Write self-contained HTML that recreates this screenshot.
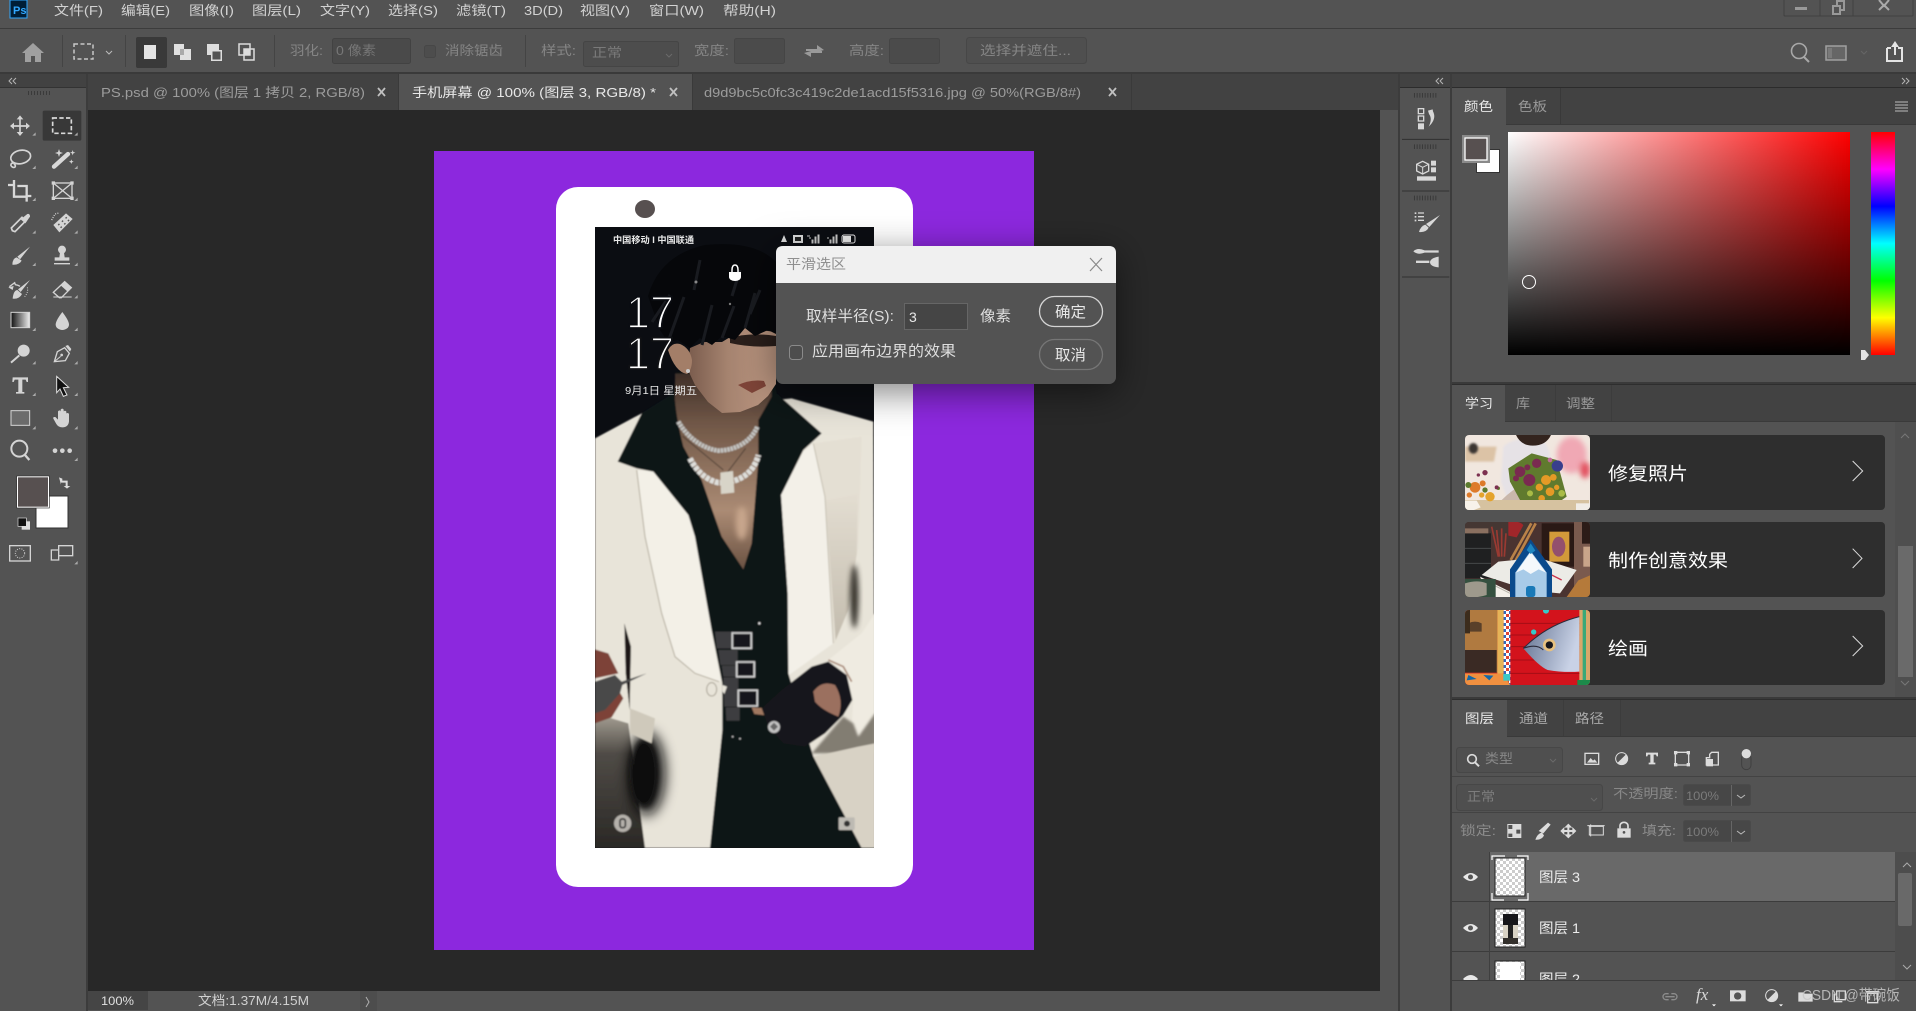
<!DOCTYPE html>
<html lang="zh"><head><meta charset="utf-8"><title>Photoshop</title>
<style>
html,body{margin:0;padding:0;background:#535353;width:1916px;height:1011px;overflow:hidden}
svg{display:block;position:absolute;left:0;top:0}
text{font-family:"Liberation Sans","Noto Sans CJK SC",sans-serif}
.m{fill:#d2d2d2;font-size:13px}
.d{fill:#858585;font-size:13px}
.p{fill:#9c9c9c;font-size:13px}
.w{fill:#e8e8e8;font-size:13px}
.c{fill:#fff;font-size:18px}
.l{fill:#dedede;font-size:15px}
</style></head><body>
<svg width="1916" height="1011" viewBox="0 0 1916 1011" xmlns="http://www.w3.org/2000/svg">
<defs>
<linearGradient id="gh"><stop offset="0" stop-color="#fff"/><stop offset="1" stop-color="#f00"/></linearGradient>
<linearGradient id="gv" x2="0" y2="1"><stop offset="0" stop-color="#000" stop-opacity="0"/><stop offset="1" stop-color="#000"/></linearGradient>
<linearGradient id="hue" x2="0" y2="1"><stop offset="0" stop-color="#f00"/><stop offset=".167" stop-color="#f0f"/><stop offset=".333" stop-color="#00f"/><stop offset=".5" stop-color="#0ff"/><stop offset=".667" stop-color="#0f0"/><stop offset=".833" stop-color="#ff0"/><stop offset="1" stop-color="#f00"/></linearGradient>
<linearGradient id="tg"><stop offset="0" stop-color="#111"/><stop offset="1" stop-color="#eee"/></linearGradient>
<linearGradient id="sk" x2="0" y2="1"><stop offset="0" stop-color="#3f2f28"/><stop offset=".25" stop-color="#6f5646"/><stop offset=".7" stop-color="#ab8b74"/><stop offset="1" stop-color="#6a5142"/></linearGradient>
<linearGradient id="fc"><stop offset="0" stop-color="#7a5c4d"/><stop offset=".45" stop-color="#a5836f"/><stop offset="1" stop-color="#c09a84"/></linearGradient>
<linearGradient id="pn" x2="0" y2="1"><stop offset="0" stop-color="#e3ddd1"/><stop offset="1" stop-color="#c3bcae"/></linearGradient>
<linearGradient id="lf" x2="0" y2="1"><stop offset="0" stop-color="#a8a296"/><stop offset=".3" stop-color="#4f4b46"/><stop offset="1" stop-color="#2a2825"/></linearGradient>
<linearGradient id="fish" x2="1" y2=".3"><stop offset="0" stop-color="#60708f"/><stop offset="1" stop-color="#c9d2e6"/></linearGradient>
<pattern id="chk" width="6" height="6" patternUnits="userSpaceOnUse"><rect width="6" height="6" fill="#fff"/><rect width="3" height="3" fill="#ccc"/><rect x="3" y="3" width="3" height="3" fill="#ccc"/></pattern>
<pattern id="chk2" width="18" height="18" patternUnits="userSpaceOnUse"><rect width="18" height="18" fill="#fff"/><rect width="9" height="9" fill="#d43"/><rect x="9" y="9" width="9" height="9" fill="#36b"/></pattern>
<filter id="b20" x="-80%" y="-80%" width="260%" height="260%"><feGaussianBlur stdDeviation="20"/></filter>
<filter id="b8" x="-50%" y="-50%" width="200%" height="200%"><feGaussianBlur stdDeviation="8"/></filter>
<filter id="b3" x="-50%" y="-50%" width="200%" height="200%"><feGaussianBlur stdDeviation="3"/></filter>
<filter id="b2" x="-5%" y="-5%" width="110%" height="110%"><feGaussianBlur stdDeviation="2"/></filter>
<filter id="sh" x="-30%" y="-40%" width="160%" height="220%"><feDropShadow dx="0" dy="8" stdDeviation="18" flood-color="#000" flood-opacity=".5"/></filter>
<clipPath id="ph"><rect x="595" y="227" width="279" height="621"/></clipPath>
<clipPath id="c1"><rect x="75" y="165" width="375" height="225" rx="12"/></clipPath>
<clipPath id="c2"><rect x="75" y="426" width="375" height="225" rx="12"/></clipPath>
<clipPath id="c3"><rect x="75" y="690" width="375" height="225" rx="12"/></clipPath>
<clipPath id="lay"><rect x="1452" y="852" width="443" height="128"/></clipPath>
</defs>

<!-- chrome -->
<rect width="1916" height="1011" fill="#535353"/>
<rect y="28" width="1916" height="1" fill="#3c3c3c"/>
<rect y="72" width="1916" height="2" fill="#3a3a3a"/>
<rect x="88" y="74" width="1312" height="36" fill="#424242"/>
<rect x="0" y="74" width="86" height="14" fill="#424242"/>
<rect x="0" y="87" width="86" height="1" fill="#333"/>
<rect x="86" y="74" width="2" height="937" fill="#3c3c3c"/>
<rect x="88" y="110" width="1292" height="881" fill="#282828"/>
<rect x="1380" y="110" width="20" height="901" fill="#535353"/>
<rect x="1400" y="74" width="516" height="14" fill="#424242"/>
<rect x="1400" y="87" width="516" height="1" fill="#2c2c2c"/>
<rect x="1398" y="74" width="2" height="937" fill="#3c3c3c"/>
<rect x="1450" y="74" width="2" height="937" fill="#3c3c3c"/>

<!-- logo + menu -->
<rect x="10" y="0" width="17" height="18" fill="#001e36" stroke="#31a8ff"/>
<text x="13" y="14" font-size="11" font-weight="bold" fill="#31a8ff">Ps</text>
<text class="m" x="54" y="15" textLength="49" lengthAdjust="spacingAndGlyphs">文件(F)</text>
<text class="m" x="121" y="15" textLength="49" lengthAdjust="spacingAndGlyphs">编辑(E)</text>
<text class="m" x="189" y="15" textLength="45" lengthAdjust="spacingAndGlyphs">图像(I)</text>
<text class="m" x="252" y="15" textLength="49" lengthAdjust="spacingAndGlyphs">图层(L)</text>
<text class="m" x="320" y="15" textLength="50" lengthAdjust="spacingAndGlyphs">文字(Y)</text>
<text class="m" x="388" y="15" textLength="50" lengthAdjust="spacingAndGlyphs">选择(S)</text>
<text class="m" x="456" y="15" textLength="50" lengthAdjust="spacingAndGlyphs">滤镜(T)</text>
<text class="m" x="524" y="15" textLength="39" lengthAdjust="spacingAndGlyphs">3D(D)</text>
<text class="m" x="580" y="15" textLength="50" lengthAdjust="spacingAndGlyphs">视图(V)</text>
<text class="m" x="649" y="15" textLength="55" lengthAdjust="spacingAndGlyphs">窗口(W)</text>
<text class="m" x="723" y="15" textLength="53" lengthAdjust="spacingAndGlyphs">帮助(H)</text>

<!-- window controls -->
<path d="M1784 0v15q0 1 1 1h127q1 0 1-1V0M1820 0v16M1853 0v16" fill="none" stroke="#404040"/>
<rect x="1795" y="7" width="12" height="3" fill="#999"/>
<path d="M1833 6h7v8h-7zM1837 6V1h7v9h-4" fill="none" stroke="#999" stroke-width="2"/>
<path d="M1879 0l5 6 5-6M1879 10l5-5 5 5" fill="none" stroke="#aaa" stroke-width="2"/>

<!-- options bar -->
<path d="M33 43l11 10h-3v9h-6v-6h-4v6h-6v-9h-3z" fill="#a0a0a0"/>
<rect x="62" y="35" width="1" height="32" fill="#444"/>
<rect x="74" y="44" width="19" height="15" fill="none" stroke="#c8c8c8" stroke-width="1.5" stroke-dasharray="4 2.5"/>
<path d="M106 51l3 3 3-3" fill="none" stroke="#bbb"/>
<rect x="125" y="35" width="1" height="32" fill="#444"/>
<rect x="136" y="37" width="31" height="31" rx="2" fill="#393939"/>
<rect x="144" y="45" width="12" height="14" fill="#e4e4e4"/>
<path d="M174 44h10v5h7v11h-11v-5h-6z" fill="#e0e0e0"/><path d="M180 49h4v6h-4z" fill="#aaa"/>
<path d="M207 44h12v6h3v11h-11v-6h-4z" fill="#ddd"/><rect x="212" y="51" width="9" height="9" fill="#535353" stroke="#ddd"/>
<rect x="239" y="44" width="11" height="11" fill="none" stroke="#ddd" stroke-width="1.5"/><rect x="244" y="49" width="10" height="11" fill="none" stroke="#ddd" stroke-width="1.5"/><rect x="244" y="49" width="6" height="6" fill="#ddd"/>
<rect x="274" y="35" width="1" height="32" fill="#444"/>
<text class="d" x="290" y="55" textLength="33" lengthAdjust="spacingAndGlyphs">羽化:</text>
<rect x="332.500" y="38.500" width="78" height="25" rx="2" fill="#4a4a4a" stroke="#424242"/>
<text x="336" y="55" font-size="13" fill="#777" textLength="40" lengthAdjust="spacingAndGlyphs">0 像素</text>
<rect x="424.500" y="45.500" width="11" height="12" rx="2" fill="#4d4d4d" stroke="#474747"/>
<text class="d" x="445" y="55" textLength="58" lengthAdjust="spacingAndGlyphs">消除锯齿</text>
<rect x="525" y="35" width="1" height="32" fill="#444"/>
<text class="d" x="541" y="55" textLength="35" lengthAdjust="spacingAndGlyphs">样式:</text>
<rect x="583.500" y="41.500" width="95" height="25" rx="2" fill="#4d4d4d" stroke="#454545"/>
<text x="592" y="57" font-size="13" fill="#7a7a7a" textLength="30" lengthAdjust="spacingAndGlyphs">正常</text>
<path d="M666 54l3 3 3-3" fill="none" stroke="#6a6a6a"/>
<text class="d" x="694" y="55" textLength="35" lengthAdjust="spacingAndGlyphs">宽度:</text>
<rect x="734.500" y="38.500" width="50" height="25" rx="2" fill="#4b4b4b" stroke="#454545"/>
<path d="M806 49h11v-4l7 5-7 2v-1h-11zM822 53h-11v4l-7-4 7-2v0h11z" fill="#9a9a9a"/>
<text class="d" x="849" y="55" textLength="35" lengthAdjust="spacingAndGlyphs">高度:</text>
<rect x="889.500" y="38.500" width="50" height="25" rx="2" fill="#4b4b4b" stroke="#454545"/>
<rect x="966.500" y="37.500" width="120" height="26" rx="3" fill="#4f4f4f" stroke="#474747"/>
<text class="d" x="980" y="55" textLength="91" lengthAdjust="spacingAndGlyphs">选择并遮住...</text>
<circle cx="1799" cy="51" r="7.500" fill="none" stroke="#a8a8a8" stroke-width="1.6"/><path d="M1804 57l5 5" stroke="#a8a8a8" stroke-width="2"/>
<rect x="1826" y="46" width="20" height="14" fill="#666" stroke="#a0a0a0" stroke-width="1.500"/><rect x="1828" y="48" width="4" height="10" fill="#7a7a7a"/>
<path d="M1861 51l3 3 3-3" fill="none" stroke="#666"/>
<path d="M1887 48h3v-1M1899 47v1h3v13h-15v-13" fill="none" stroke="#e4e4e4" stroke-width="2"/><path d="M1895 41l-4 6h3v8h2v-8h3z" fill="#e4e4e4"/>

<!-- collapse arrows -->
<path d="M12 78l-3 3 3 3M16 78l-3 3 3 3M1439 78l-3 3 3 3M1443 78l-3 3 3 3M1902 78l3 3-3 3M1906 78l3 3-3 3" fill="none" stroke="#b5b5b5" stroke-width="1"/>
<line x1="28" x2="52" y1="93" y2="93" stroke="#3a3a3a" stroke-width="4" stroke-dasharray="1 2"/>

<!-- doc tabs -->
<rect x="399" y="74" width="293" height="36" fill="#535353"/>
<rect x="398" y="74" width="1" height="36" fill="#3a3a3a"/><rect x="692" y="74" width="1" height="36" fill="#3a3a3a"/><rect x="1131" y="74" width="1" height="36" fill="#3a3a3a"/>
<text class="p" x="101" y="97" textLength="264" lengthAdjust="spacingAndGlyphs">PS.psd @ 100% (图层 1 拷贝 2, RGB/8)</text>
<text class="w" x="412" y="97" textLength="244" lengthAdjust="spacingAndGlyphs">手机屏幕 @ 100% (图层 3, RGB/8) *</text>
<text class="p" x="704" y="97" textLength="377" lengthAdjust="spacingAndGlyphs">d9d9bc5c0fc3c419c2de1acd15f5316.jpg @ 50%(RGB/8#)</text>
<path d="M378 88l7 8m0-8l-7 8M670 88l7 8m0-8l-7 8M1109 88l7 8m0-8l-7 8" stroke="#c0c0c0" stroke-width="1.800"/>

<!-- document -->
<rect x="434" y="151" width="600" height="799" fill="#8c28de"/>
<rect x="556" y="187" width="357" height="700" rx="22" fill="#fff"/>
<ellipse cx="645" cy="209" rx="10" ry="9" fill="#575050"/>
<g clip-path="url(#ph)">
 <rect x="595" y="227" width="279" height="621" fill="#0b0d12"/>
 <g transform="translate(595 380) scale(.33333)" filter="url(#b2)">
  <!-- jacket -->
  <path d="M0 175L140 100 590 55 835 125 840 1404H0z" fill="#e8e4d9"/>
  <!-- right panel -->
  <path d="M655 190L800 170 790 500 760 690 720 790z" fill="#e4dfd3"/>
  <path d="M692 362L788 342 785 520 760 690 722 780z" fill="url(#pn)"/>
  <ellipse cx="778" cy="650" rx="13" ry="95" fill="#35322c" filter="url(#b8)"/>
  <!-- lapels -->
  <path d="M125 270L175 275 280 405 300 470 350 750 378 905 300 880 240 830 200 700 150 470z" fill="#f3f0e7"/>
  <path d="M125 270L150 470 200 700 240 830 300 880 372 905" fill="none" stroke="#b4ad9e" stroke-width="3"/>
  <path d="M655 190L690 350 715 790 582 885 558 345 625 215z" fill="#f3f0e8"/>
  <path d="M655 190L690 350 715 790" fill="none" stroke="#c5bfb1" stroke-width="3"/>
  <!-- sleeve -->
  <path d="M700 840L800 760 840 700V1000L790 1070 770 1040 775 960 755 885z" fill="#efebe1"/>
  <path d="M650 1120L745 1010 775 1030 790 1070 840 1000V1120z" fill="#827d72" filter="url(#b3)"/>
  <path d="M655 1130L800 1404H840V1090L790 1100z" fill="#d8d2c5"/>
  <!-- left bottom shadow -->
  <path d="M0 1000L100 1030 150 1404H0z" fill="url(#lf)"/>
  <ellipse cx="155" cy="1180" rx="55" ry="125" fill="#0f0e0c" filter="url(#b20)"/>
  <ellipse cx="145" cy="1180" rx="40" ry="100" fill="#0f0e0c" filter="url(#b8)"/>
  <path d="M105 985L180 1015 170 1090 105 1060z" fill="#cfc9bb"/>
  <path d="M88 730L108 800 104 990 92 880z" fill="#1b1917"/>
  <!-- shirt -->
  <path d="M140 100L68 245 125 265 175 275 280 405 300 470 350 750 382 910 382 1050 345 1404H800L655 1130 580 880 578 640 558 345 625 210 680 160 545 40 530-20H245L235 40z" fill="#101216"/>
  <!-- skin -->
  <path d="M240-20V60Q245 120 265 200L320 300 380 470 445 568 470 490 490 240 490 120 530 50V-20z" fill="url(#sk)"/>
  <ellipse cx="440" cy="430" rx="18" ry="50" fill="#c7a68c" filter="url(#b8)"/>
  <!-- necklaces -->
  <path d="M250 125C275 170 320 205 370 212 430 210 470 180 487 140" fill="none" stroke="#c2c2c0" stroke-width="14" stroke-dasharray="8 2"/>
  <path d="M285 235C305 275 335 300 370 308 425 310 475 285 490 225" fill="none" stroke="#dededa" stroke-width="17" stroke-dasharray="12 3"/>
  <path d="M262 168L385 270M452 205L395 280" fill="none" stroke="#4f4036" stroke-width="3"/>
  <path d="M376 278l38-5 4 65-40 4z" fill="#d8d4c8"/>
  <!-- belt -->
  <path d="M360 755h55v50h-50zM370 810h58v45h-52zM380 857h45v33h-40zM385 892h45v88h-42zM392 982h42v40h-40z" fill="#3d3e40"/>
  <rect x="412" y="759" width="57" height="46" fill="#17181a" stroke="#d4d4d4" stroke-width="5"/>
  <rect x="425" y="846" width="53" height="44" fill="#17181a" stroke="#d4d4d4" stroke-width="5"/>
  <rect x="430" y="931" width="57" height="47" fill="#17181a" stroke="#d4d4d4" stroke-width="5"/>
  <circle cx="493" cy="730" r="3.500" fill="#eee"/><circle cx="413" cy="1070" r="2.500" fill="#ddd"/><circle cx="435" cy="1076" r="2.500" fill="#ddd"/>
  <ellipse cx="350" cy="928" rx="15" ry="20" fill="#e8e4d9" stroke="#a8a294" stroke-width="3"/>
  <path d="M382 915l14 5-8 22-6-8z" fill="#e9e5da"/>
  <!-- glove -->
  <path d="M470 982L512 985 512 1006 478 1002z" fill="#a07860"/>
  <path d="M500 985L560 930 650 860 700 845 755 885 772 960 745 1005 690 1060 630 1100 565 1090 520 1040z" fill="#14161a"/>
  <path d="M655 935Q680 900 720 915 748 960 730 1010 680 990 660 965z" fill="#9b705e"/>
  <path d="M700 840L745 860 770 905" stroke="#a98a78" stroke-width="5" fill="none"/>
  <circle cx="537" cy="1041" r="18" fill="#c2c2c2"/><path d="M525 1040l12-12 12 12-12 12z" fill="#666"/>
  <!-- hand + key -->
  <path d="M0 808L40 820 70 880 0 895zM0 1030L50 1012 85 955 70 930 0 990z" fill="#7d4337"/>
  <path d="M0 905L60 885 80 905 155 880 82 915 75 940 30 990 0 1000z" fill="#48484a"/>
  <!-- lower icons -->
  <circle cx="83" cy="1330" r="26" fill="#b5b1ab"/><rect x="75" y="1317" width="16" height="26" rx="6" fill="none" stroke="#333" stroke-width="5"/>
  <rect x="731" y="1312" width="48" height="38" rx="3" fill="#bdbab3"/><circle cx="756" cy="1331" r="9" fill="#333"/>
 </g>
 <!-- head -->
 <path d="M690 348L704 342 722 342 745 328 776 332V384L768 396 758 405 740 412 722 413 708 402 695 385 688 370z" fill="url(#fc)"/>
 <path d="M738 385q13-6 26-4l2 5-14 7z" fill="#7e4438"/>
 <path d="M730 338q20-6 46-2v10q-25 2-46-3z" fill="#2a1f1b"/>
 <path d="M680 344q10 4 12 16 0 10-5 14-12-2-19-24 4-8 12-6z" fill="#a37e68"/>
 <circle cx="688" cy="371" r="2" fill="#ccc"/>
 <path d="M648 296Q660 255 705 245 755 240 776 262V334L768 330 755 336 745 328 735 340 722 336 712 345 700 338 690 348 678 340 668 342 660 330z" fill="#06070a"/>
 <path d="M652 322l18-27M668 342l16-45M702 345l10-40M722 338l12-32M745 328l10-35M700 260l-6 30M740 270l-8 26M760 290l-10 24" stroke="#191b20" stroke-width="3"/>
 <circle cx="696" cy="282" r="1.500" fill="#888"/><circle cx="730" cy="304" r="1.200" fill="#777"/>
</g>
<!-- phone overlay text -->
<text x="613" y="243" font-size="9" font-weight="bold" fill="#e8e8e8" textLength="81" lengthAdjust="spacingAndGlyphs">中国移动 I 中国联通</text>
<path d="M781 242l3-7 3 7z" fill="#ddd"/>
<rect x="793" y="235" width="10" height="8" fill="#ddd"/><rect x="795" y="237" width="6" height="4" fill="#222"/>
<path d="M807 236h3M809 238h2M812 243v-3h1v3zM815 243v-6h1v6zM818 243v-8h1v8zM827 238h2M830 243v-3h1v3zM833 243v-6h1v6zM836 243v-8h1v8z" stroke="#ccc" fill="none"/>
<rect x="842" y="235" width="13" height="8" rx="2" fill="none" stroke="#eee"/><rect x="843" y="236" width="8" height="6" fill="#eee"/>
<path d="M732 272v-2q0-5 3-5t3 5v2" fill="none" stroke="#fff" stroke-width="1.500"/><path d="M729 272h12v5a6 4 0 0 1-12 0z" fill="#fff"/>
<text x="626" y="328" font-size="45" fill="#fff" stroke="#0b0d12" stroke-width="1.800" textLength="48" lengthAdjust="spacingAndGlyphs">17</text>
<text x="626" y="369" font-size="45" fill="#fff" stroke="#101114" stroke-width="1.800" textLength="48" lengthAdjust="spacingAndGlyphs">17</text>
<text x="625" y="394" font-size="10.500" fill="#e8e8e8" textLength="72" lengthAdjust="spacingAndGlyphs">9月1日 星期五</text>

<!-- dialog -->
<g filter="url(#sh)"><rect x="776" y="246" width="340" height="138" rx="7" fill="#535353"/></g>
<path d="M776 283v-30q0-7 7-7h326q7 0 7 7v30z" fill="#f0f0f0"/>
<text x="786" y="269" font-size="14" fill="#8f8f8f" textLength="60" lengthAdjust="spacingAndGlyphs">平滑选区</text>
<path d="M1090 258l12 13m0-13l-12 13" stroke="#8a8a8a" stroke-width="1.200"/>
<text class="l" x="806" y="321" textLength="88" lengthAdjust="spacingAndGlyphs">取样半径(S):</text>
<rect x="904.500" y="303.500" width="63" height="26" fill="#454545" stroke="#666"/>
<text x="909" y="322" font-size="14" fill="#e8e8e8">3</text>
<text class="l" x="980" y="321" textLength="31" lengthAdjust="spacingAndGlyphs">像素</text>
<rect x="1039.500" y="296.500" width="63" height="30" rx="15" fill="none" stroke="#d4d4d4" stroke-width="1.300"/>
<text x="1055" y="317" font-size="15" fill="#e8e8e8" textLength="31" lengthAdjust="spacingAndGlyphs">确定</text>
<rect x="1039.500" y="339.500" width="63" height="30" rx="15" fill="none" stroke="#767676" stroke-width="1.300"/>
<text x="1055" y="360" font-size="15" fill="#e8e8e8" textLength="31" lengthAdjust="spacingAndGlyphs">取消</text>
<rect x="789.500" y="345.500" width="13" height="14" rx="3" fill="#4d4d4d" stroke="#8a8a8a"/>
<text class="l" x="812" y="356" textLength="144" lengthAdjust="spacingAndGlyphs">应用画布边界的效果</text>

<!-- tools -->
<g transform="translate(0 100) scale(.33333)" fill="#d4d4d4" stroke="none">
 <rect x="128" y="32" width="116" height="90" rx="5" fill="#383838"/>
 <path fill="#aaa" d="M107 97v10h-10zM233 97v10h-10zM107 197v10h-10zM233 197v10h-10zM107 293v10h-10zM233 293v10h-10zM107 391v10h-10zM233 391v10h-10zM107 488v10h-10zM233 488v10h-10zM107 585v10h-10zM233 585v10h-10zM107 683v10h-10zM233 683v10h-10zM107 783v10h-10zM233 783v10h-10zM107 878v10h-10zM233 878v10h-10zM107 978v10h-10zM233 978v10h-10zM233 1073v10h-10zM233 1383v10h-10z"/>
 <!-- move -->
 <path d="M60 52V104M36 78H84" stroke="#d4d4d4" stroke-width="5" fill="none"/>
 <path d="M60 46l10 12H50zM60 108l10-12H50zM30 78l12-10v20zM90 78l-12-10v20z"/>
 <!-- marquee -->
 <rect x="158" y="54" width="56" height="46" fill="none" stroke="#d8d8d8" stroke-width="5" stroke-dasharray="13 7"/>
 <!-- lasso -->
 <g fill="none" stroke="#d4d4d4" stroke-width="5"><ellipse cx="62" cy="171" rx="30" ry="20" transform="rotate(-12 62 171)"/><path d="M45 190c-14-4-16 8-6 12 10 2 8-8 2-12"/></g>
 <!-- wand -->
 <path d="M162 200l42-38" stroke="#d8d8d8" stroke-width="13" stroke-linecap="round"/>
 <path d="M177 147l3 9 9 3-9 3-3 9-3-9-9-3 9-3zM218 150l2 6 6 2-6 2-2 6-2-6-6-2 6-2zM214 178l2 5 5 2-5 2-2 5-2-5-5-2 5-2z"/>
 <!-- crop -->
 <path d="M24 255H42M42 240V290H82M52 258H80V305M80 288H94" fill="none" stroke="#d8d8d8" stroke-width="7"/>
 <!-- frame -->
 <g fill="none" stroke="#d4d4d4" stroke-width="4"><rect x="160" y="249" width="56" height="46"/><path d="M160 249l56 46m0-46l-56 46"/></g>
 <path d="M155 244h10v10h-10zM211 244h10v10h-10zM155 290h10v10h-10zM211 290h10v10h-10z"/>
 <!-- eyedropper -->
 <path d="M37 392l-3-8 32-32 11 11-32 32z" fill="none" stroke="#d4d4d4" stroke-width="5"/>
 <path d="M62 358l20-16q8-2 8 8l-14 20z"/>
 <!-- heal -->
 <path d="M160 375l38-35 20 17-40 40z"/><path d="M175 372l3 3M186 362l3 3M197 352l3 3M182 380l3 3M193 370l3 3M204 360l3 3" stroke="#555" stroke-width="5"/>
 <path d="M155 360l10-18 12-3" fill="none" stroke="#d4d4d4" stroke-width="4" stroke-dasharray="3 4"/>
 <!-- brush -->
 <path d="M90 440L60 478 52 470z"/><path d="M50 472q-12 2-13 22 20 2 28-12z"/>
 <!-- stamp -->
 <circle cx="186" cy="449" r="12"/><path d="M180 458h12l2 14h14v10h-44v-10h14zM162 489h48v4h-48z"/>
 <!-- history -->
 <path d="M90 540L62 576 54 568z"/><path d="M52 570q-12 2-14 26 20 2 28-14z"/>
 <path d="M28 560l16-12 2 6q8 1 14 5" fill="none" stroke="#d4d4d4" stroke-width="4"/><path d="M25 562l16-4-3 12z"/>
 <path d="M82 562q4 14-8 28" fill="none" stroke="#d4d4d4" stroke-width="3" stroke-dasharray="3 4"/>
 <!-- eraser -->
 <path d="M160 577l34-32 20 18-30 30h-6z" fill="none" stroke="#d4d4d4" stroke-width="4"/>
 <path d="M182 556l12-11 20 18-12 11z"/><path d="M160 591h55" stroke="#d4d4d4" stroke-width="3"/>
 <!-- gradient -->
 <rect x="33" y="637" width="56" height="46" fill="url(#tg)" stroke="#d4d4d4" stroke-width="3"/>
 <!-- drop -->
 <path d="M187 636q-20 26-20 38a20 16 0 0 0 40 0q0-12-20-38z"/>
 <!-- dodge -->
 <circle cx="71" cy="752" r="18"/><path d="M58 766l-25 22" stroke="#d4d4d4" stroke-width="6"/>
 <!-- pen -->
 <path d="M163 785l9-30 22-12 14 17-12 22z" fill="none" stroke="#d4d4d4" stroke-width="4"/><path d="M196 738l8-3 10 12-4 8z"/><circle cx="185" cy="765" r="4"/><path d="M164 784l18-15" stroke="#d4d4d4" stroke-width="3"/>
 <!-- T -->
 <path d="M38 832h46v14h-4l-3-7H67v37h6v5H48v-5h7v-37H44l-3 7h-4z"/>
 <!-- arrow -->
 <path d="M170 829l36 33-16 1 11 22-11 4-10-22-10 11z" fill="#111" stroke="#ddd" stroke-width="3"/>
 <!-- rect -->
 <rect x="33" y="932" width="56" height="44" fill="#6b6b6b" stroke="#d4d4d4" stroke-width="3"/>
 <!-- hand -->
 <path d="M160 956q-2-6 6-5l8 8v-25q5-6 8 0v-5q5-6 9 0v5q5-4 8 1v5q6-3 8 2v22q-2 18-20 18-12 0-18-10z"/>
 <!-- zoom -->
 <circle cx="58" cy="1046" r="24" fill="none" stroke="#d4d4d4" stroke-width="6"/><path d="M74 1064l14 16" stroke="#d4d4d4" stroke-width="7"/>
 <!-- dots -->
 <circle cx="165" cy="1052" r="7"/><circle cx="187" cy="1052" r="7"/><circle cx="209" cy="1052" r="7"/>
 <!-- swatches -->
 <rect x="108" y="1188" width="96" height="96" fill="#fff" stroke="#333" stroke-width="3"/>
 <rect x="52" y="1130" width="94" height="92" fill="#575050" stroke="#fff" stroke-width="4"/>
 <rect x="50" y="1128" width="98" height="96" fill="none" stroke="#333" stroke-width="2"/>
 <path d="M177 1132l10 4v6h16v16h8l-10 8-10-8h6v-10h-14v6z" fill="#ddd"/>
 <rect x="65" y="1264" width="25" height="25" fill="#ddd"/><rect x="54" y="1254" width="25" height="25" fill="#111" stroke="#ddd" stroke-width="2"/>
 <!-- mask -->
 <rect x="29" y="1337" width="62" height="46" fill="none" stroke="#d4d4d4" stroke-width="4"/>
 <circle cx="60" cy="1360" r="14" fill="none" stroke="#d4d4d4" stroke-width="3" stroke-dasharray="3 4"/>
 <!-- screen -->
 <path d="M154 1350h22v30h-22zM176 1337h42v30h-42z" fill="none" stroke="#d4d4d4" stroke-width="4"/>
</g>

<!-- dock column -->
<g transform="translate(1400 80) scale(.33333)">
 <path d="M6 178H148M6 333H148M6 591H148" stroke="#303030" stroke-width="3"/>
 <path d="M42 46H112M42 200H112M42 354H112" stroke="#3a3a3a" stroke-width="14" stroke-dasharray="3 5"/>
 <g fill="#d8d8d8">
  <rect x="55" y="86" width="16" height="15" fill="none" stroke="#d8d8d8" stroke-width="4"/>
  <rect x="55" y="108" width="16" height="15" fill="none" stroke="#d8d8d8" stroke-width="4"/>
  <rect x="54" y="130" width="18" height="18"/>
  <path d="M84 92l14-4 1 6q12 22-13 46 12-24 1-38z"/>
  <path d="M68 244l18 9v20l-18 9-18-9v-20z" fill="none" stroke="#d8d8d8" stroke-width="4"/><path d="M50 253l18 9 18-9M68 262v20" stroke="#d8d8d8" stroke-width="3" fill="none"/>
  <rect x="93" y="242" width="15" height="15"/><rect x="93" y="262" width="15" height="15"/><rect x="51" y="289" width="57" height="13"/>
  <path d="M44 397h5v5h-5zM54 397h18v4H54zM44 408h5v5h-5zM54 408h18v4H54zM44 419h5v5h-5zM54 419h18v4H54z"/>
  <path d="M120 405L88 441 78 432z"/><path d="M76 434q-14 4-19 22 22 2 29-13z"/>
  <path d="M40 514q12-12 34-3h42v7H74q-20 8-34-4z"/><path d="M48 542h40v7H48zM116 530v32q-26-2-26-16 2-12 26-16z"/>
 </g>
</g>

<!-- panel: colour -->
<rect x="1452" y="88" width="464" height="36" fill="#424242"/>
<rect x="1452" y="124" width="464" height="1" fill="#3a3a3a"/>
<rect x="1452" y="88" width="54" height="37" fill="#535353"/>
<rect x="1560" y="88" width="1" height="36" fill="#393939"/>
<text x="1464" y="111" font-size="13" fill="#e8e8e8" textLength="29" lengthAdjust="spacingAndGlyphs">颜色</text>
<text x="1518" y="111" font-size="13" fill="#999" textLength="29" lengthAdjust="spacingAndGlyphs">色板</text>
<path d="M1895 102h13M1895 105h13M1895 108h13M1895 111h13M1895 404h13M1895 401h13M1895 398h13M1895 407h13M1895 714h13M1895 717h13M1895 720h13M1895 723h13" stroke="#bcbcbc"/>
<rect x="1476.500" y="149.500" width="23" height="23" fill="#fff" stroke="#333"/>
<rect x="1462" y="135" width="28" height="28" fill="#8a8a8a"/>
<rect x="1465" y="138" width="22" height="22" fill="#575050" stroke="#fff" stroke-width="1.300"/>
<rect x="1508" y="132" width="342" height="223" fill="url(#gh)"/>
<rect x="1508" y="132" width="342" height="223" fill="url(#gv)"/>
<circle cx="1529" cy="282" r="6.500" fill="none" stroke="#fff" stroke-width="1"/>
<rect x="1871" y="132" width="24" height="223" fill="url(#hue)"/>
<path d="M1861 350h4l4 5-4 5h-4z" fill="#e4e4e4"/>
<rect x="1452" y="382" width="464" height="2" fill="#3a3a3a"/>
<rect x="1452" y="384" width="464" height="1" fill="#2e2e2e"/>

<!-- panel: learn -->
<rect x="1452" y="385" width="464" height="36" fill="#424242"/>
<rect x="1452" y="421" width="464" height="1" fill="#3a3a3a"/>
<rect x="1452" y="385" width="53" height="37" fill="#535353"/>
<rect x="1555" y="385" width="1" height="36" fill="#3c3c3c"/><rect x="1611" y="385" width="1" height="36" fill="#3c3c3c"/>
<text x="1465" y="408" font-size="13" fill="#e8e8e8" textLength="28" lengthAdjust="spacingAndGlyphs">学习</text>
<text x="1516" y="408" font-size="13" fill="#999" textLength="14" lengthAdjust="spacingAndGlyphs">库</text>
<text x="1566" y="408" font-size="13" fill="#999" textLength="29" lengthAdjust="spacingAndGlyphs">调整</text>
<rect x="1465" y="435" width="420" height="75" rx="4" fill="#2e2e2e"/>
<rect x="1465" y="522" width="420" height="75" rx="4" fill="#2e2e2e"/>
<rect x="1465" y="610" width="420" height="75" rx="4" fill="#2e2e2e"/>
<g transform="translate(1440 380) scale(.33333)">
 <g clip-path="url(#c1)">
  <rect x="75" y="165" width="375" height="225" fill="#f1e7df"/>
  <path d="M75 200h95l-8 45H75z" fill="#dcc3a6" filter="url(#b3)"/>
  <ellipse cx="100" cy="205" rx="14" ry="16" fill="#3a3532" filter="url(#b3)"/>
  <ellipse cx="395" cy="225" rx="45" ry="55" fill="#f0a8b4" filter="url(#b8)"/>
  <ellipse cx="435" cy="270" rx="15" ry="25" fill="#e2505e" filter="url(#b8)"/>
  <path d="M190 200q30-30 110-25 40 25 30 110l-20 80H205l-22-60z" fill="#e6e2e6" filter="url(#b3)"/>
  <path d="M228 165h105q-15 32-55 32-35 0-50-32z" fill="#33241e"/>
  <path d="M185 360q40-40 90-60l20 85z" fill="#c9b7ab"/>
  <path d="M205 265l70-45 75 20 30 110-50 35-50 25-40-50-30-55z" fill="#607a2e"/>
  <g fill="#7a2a50"><circle cx="240" cy="275" r="16"/><circle cx="268" cy="300" r="18"/><circle cx="290" cy="250" r="14"/><circle cx="228" cy="295" r="9"/><circle cx="262" cy="262" r="9"/></g>
  <circle cx="352" cy="258" r="17" fill="#383e8c"/><circle cx="330" cy="240" r="7" fill="#c06a9a"/>
  <g fill="#e59a26"><circle cx="318" cy="300" r="15"/><circle cx="340" cy="292" r="10"/><circle cx="298" cy="322" r="11"/><circle cx="330" cy="335" r="13"/><circle cx="305" cy="355" r="10"/><circle cx="350" cy="322" r="8"/></g>
  <g fill="#a9bb46"><circle cx="365" cy="340" r="10"/><circle cx="270" cy="340" r="9"/><circle cx="280" cy="370" r="7"/></g>
  <path d="M75 360h372v30H75z" fill="#d6c2a0"/>
  <path d="M75 362h35l12 20-20 8H75z" fill="#f7f2ea"/>
  <rect x="408" y="370" width="42" height="20" fill="#f0ece6"/>
  <g fill="#dd7a2a"><circle cx="105" cy="322" r="16"/><circle cx="128" cy="310" r="9"/><circle cx="88" cy="345" r="8"/></g>
  <g fill="#e4a32c"><circle cx="150" cy="350" r="14"/><circle cx="125" cy="345" r="8"/></g>
  <g fill="#5b7a2e"><circle cx="85" cy="315" r="9"/><circle cx="135" cy="330" r="8"/><circle cx="175" cy="325" r="5"/></g>
  <g fill="#7c3050"><circle cx="135" cy="278" r="8"/><circle cx="170" cy="322" r="6"/><circle cx="115" cy="285" r="5"/></g>
 </g>
 <g clip-path="url(#c2)">
  <rect x="75" y="426" width="375" height="225" fill="#4a3330"/>
  <rect x="75" y="426" width="200" height="40" fill="#453733"/>
  <rect x="75" y="460" width="78" height="135" fill="#1f2021"/><path d="M75 505h78M75 550h78" stroke="#46484a" stroke-width="3"/>
  <path d="M75 445h70v15H75z" fill="#8a7060"/>
  <rect x="305" y="430" width="100" height="130" fill="#2a1915"/><rect x="328" y="455" width="60" height="90" fill="#d29a3a"/><ellipse cx="356" cy="500" rx="20" ry="30" fill="#93506d"/>
  <rect x="402" y="426" width="48" height="225" fill="#7a5a4e"/><rect x="426" y="426" width="24" height="65" fill="#2c1c18"/><rect x="430" y="500" width="20" height="60" fill="#c9a58a"/>
  <path d="M205 426q35-5 45 10l-20 36-25-5z" fill="#a0262a"/>
  <path d="M155 440l20 90M170 450l8 80M185 445l0 85M198 460l-5 70" stroke="#9a3a32" stroke-width="5"/><path d="M212 540l62-110M225 545l62-115" stroke="#b98248" stroke-width="8"/>
  <path d="M125 585l50-40 120-12 115 37-50 70-90-8z" fill="#ecebe6"/>
  <path d="M120 590l100 50-8 11H145z" fill="#f3f0e9"/>
  <path d="M130 600l80 40" stroke="#b8b5ac" stroke-width="3"/>
  <path d="M325 580l40 20" stroke="#c8304a" stroke-width="4"/>
  <path d="M75 597h92v54H75z" fill="#35503f"/><path d="M75 610q38-12 65 0v35q-30 10-65 6z" fill="#9e998c"/>
  <path d="M380 651l35-50 35-15v65z" fill="#b57a3a"/>
  <path d="M210 651V568l62-90 64 90v83z" fill="#0a4a8c"/>
  <path d="M226 651V578l46-65 48 65v73z" fill="#a8cbe8"/><path d="M228 578l44-62 46 62-22-10-24 14-22-14z" fill="#f4f8fb"/><path d="M260 510l12-20 14 22-14 10z" fill="#1e86c0"/><rect x="258" y="618" width="28" height="33" rx="8" fill="#1879b8"/>
 </g>
 <g clip-path="url(#c3)">
  <rect x="75" y="690" width="375" height="225" fill="#d3131c"/>
  <rect x="75" y="690" width="97" height="188" fill="#b07a40"/><path d="M75 810h95v68H75z" fill="#3a2a24"/><path d="M85 730q20-10 40 0v25H85z" fill="#59402a"/><path d="M75 690h15v70H75z" fill="#3c2c1c"/>
  <rect x="172" y="690" width="19" height="225" fill="#e5b458"/>
  <rect x="191" y="690" width="20" height="225" fill="url(#chk2)"/>
  <rect x="418" y="690" width="32" height="225" fill="#d8a86a"/><rect x="428" y="690" width="10" height="225" fill="#3aa878"/>
  <path d="M211 730h207M211 765h207M211 800h207M211 840h207M211 880h207" stroke="#a50e16" stroke-width="3"/>
  <path d="M75 880h115l20 35H75z" fill="#f09040"/><path d="M85 885l25 12-30 4zM130 885l30 2-12 14z" fill="#1468a8"/><rect x="190" y="882" width="20" height="20" fill="#38c8c8"/>
  <circle cx="281" cy="756" r="8" fill="#38c8c8"/><circle cx="318" cy="692" r="9" fill="#38c8c8"/>
  <path d="M250 805q70-70 168-95v165q-50 3-95-5-25-10-73-65z" fill="url(#fish)"/>
  <path d="M250 805q40-15 60 5" fill="none" stroke="#2a2a3a" stroke-width="3"/>
  <path d="M250 805q70-70 168-95" fill="none" stroke="#2a2a3a" stroke-width="3"/>
  <circle cx="328" cy="795" r="19" fill="#e7c180"/><circle cx="328" cy="795" r="11" fill="#16161c"/>
  <rect x="412" y="900" width="38" height="15" fill="#1c8a4a"/>
 </g>
 <path d="M1238 243l30 30-30 30M1238 506l28 29-28 29M1238 768l30 30-30 30" fill="none" stroke="#dcdcdc" stroke-width="3"/>
</g>
<text class="c" x="1608" y="480" textLength="80" lengthAdjust="spacingAndGlyphs">修复照片</text>
<text class="c" x="1608" y="567" textLength="120" lengthAdjust="spacingAndGlyphs">制作创意效果</text>
<text class="c" x="1608" y="655" textLength="40" lengthAdjust="spacingAndGlyphs">绘画</text>
<rect x="1895" y="422" width="21" height="275" fill="#4f4f4f"/>
<rect x="1898" y="546" width="15" height="131" fill="#6a6a6a"/>
<path d="M1901 438l4-4 4 4M1901 681l4 4 4-4" fill="none" stroke="#777"/>
<rect x="1452" y="697" width="464" height="2" fill="#3a3a3a"/>
<rect x="1452" y="699" width="464" height="1" fill="#2e2e2e"/>

<!-- panel: layers -->
<rect x="1452" y="700" width="464" height="36" fill="#424242"/>
<rect x="1452" y="736" width="464" height="1" fill="#3a3a3a"/>
<rect x="1452" y="700" width="55" height="37" fill="#535353"/>
<rect x="1563" y="700" width="1" height="36" fill="#3c3c3c"/><rect x="1620" y="700" width="1" height="36" fill="#3c3c3c"/>
<text x="1465" y="723" font-size="13" fill="#e8e8e8" textLength="29" lengthAdjust="spacingAndGlyphs">图层</text>
<text x="1519" y="723" font-size="13" fill="#aaa" textLength="29" lengthAdjust="spacingAndGlyphs">通道</text>
<text x="1575" y="723" font-size="13" fill="#aaa" textLength="29" lengthAdjust="spacingAndGlyphs">路径</text>
<rect x="1456.500" y="747.500" width="106" height="25" rx="3" fill="#4f4f4f" stroke="#474747"/>
<rect x="1452" y="776" width="464" height="1" fill="#434343"/>
<rect x="1452" y="812" width="464" height="1" fill="#434343"/>
<text x="1485" y="763" font-size="13" fill="#888" textLength="28" lengthAdjust="spacingAndGlyphs">类型</text>
<path d="M1550 759l3 3 3-3" fill="none" stroke="#6a6a6a"/>
<rect x="1456.500" y="784.500" width="146" height="26" rx="3" fill="#4f4f4f" stroke="#474747"/>
<text x="1467" y="801" font-size="13" fill="#7d7d7d" textLength="28" lengthAdjust="spacingAndGlyphs">正常</text>
<path d="M1591 798l3 3 3-3" fill="none" stroke="#6a6a6a"/>
<text x="1613" y="798" font-size="13" fill="#888" textLength="65" lengthAdjust="spacingAndGlyphs">不透明度:</text>
<rect x="1683.500" y="784.500" width="67" height="21" rx="2" fill="#474747" stroke="#4a4a4a"/><rect x="1731" y="785" width="1" height="21" fill="#666"/>
<text x="1686" y="800" font-size="12" fill="#7b7b7b" textLength="33" lengthAdjust="spacingAndGlyphs">100%</text>
<text x="1460" y="835" font-size="13" fill="#8c8c8c" textLength="36" lengthAdjust="spacingAndGlyphs">锁定:</text>
<text x="1642" y="835" font-size="13" fill="#8c8c8c" textLength="34" lengthAdjust="spacingAndGlyphs">填充:</text>
<rect x="1683.500" y="820.500" width="67" height="21" rx="2" fill="#474747" stroke="#4a4a4a"/><rect x="1731" y="821" width="1" height="21" fill="#666"/>
<text x="1686" y="836" font-size="12" fill="#7b7b7b" textLength="33" lengthAdjust="spacingAndGlyphs">100%</text>
<path d="M1737 795l4 3 4-3M1737 831l4 3 4-3" fill="none" stroke="#bbb"/>

<g clip-path="url(#lay)">
 <rect x="1490" y="852" width="405" height="49" fill="#696969"/>
 <rect x="1452" y="901" width="443" height="1" fill="#3c3c3c"/><rect x="1452" y="951" width="443" height="1" fill="#3c3c3c"/>
 <rect x="1489" y="852" width="1" height="128" fill="#3f3f3f"/>
 <rect x="1495" y="858" width="30" height="38" fill="url(#chk)" stroke="#222"/>
 <path d="M1505 856h-13v4M1517 856h11v4M1492 893v7h12M1528 893v7h-10" fill="none" stroke="#fff" stroke-width="1.200"/>
 <rect x="1495" y="909" width="30" height="38" fill="url(#chk)" stroke="#222"/>
 <rect x="1503" y="914" width="15" height="30" fill="#d8d2c4"/><rect x="1503" y="914" width="15" height="11" fill="#16161a"/><rect x="1508" y="925" width="5" height="19" fill="#222"/><rect x="1503" y="938" width="15" height="6" fill="#33302c"/>
 <rect x="1495" y="961" width="30" height="38" fill="url(#chk)" stroke="#222"/><rect x="1500" y="962" width="20" height="30" fill="#fff"/>
 <text x="1539" y="882" font-size="14" fill="#ececec" textLength="41" lengthAdjust="spacingAndGlyphs">图层 3</text>
 <text x="1539" y="933" font-size="14" fill="#ececec" textLength="41" lengthAdjust="spacingAndGlyphs">图层 1</text>
 <text x="1539" y="984" font-size="14" fill="#ececec" textLength="41" lengthAdjust="spacingAndGlyphs">图层 2</text>
 <g fill="#e8e8e8"><path d="M1463 877q8-8 15 0-7 8-15 0z"/><path d="M1463 928q8-8 15 0-7 8-15 0z"/><path d="M1463 979q8-8 15 0-7 8-15 0z"/></g>
 <circle cx="1470.500" cy="877" r="2.500" fill="#555"/><circle cx="1470.500" cy="928" r="2.500" fill="#555"/>
</g>
<rect x="1895" y="852" width="21" height="128" fill="#4d4d4d"/>
<rect x="1898" y="873" width="14" height="53" rx="2" fill="#696969"/>
<path d="M1903 867l4-4 4 4M1903 965l4 4 4-4" fill="none" stroke="#aaa"/>
<rect x="1452" y="980" width="464" height="1" fill="#3c3c3c"/>

<g transform="translate(1440 695) scale(.33333)">
 <g fill="none" stroke="#dcdcdc">
  <circle cx="96" cy="192" r="13" stroke-width="5"/><path d="M105 202l12 12" stroke-width="6"/>
  <rect x="435" y="175" width="41" height="33" stroke-width="4"/>
  <path d="M706 172h40v38h-40z" stroke-width="4"/>
 </g>
 <g fill="#dcdcdc">
  <path d="M441 203l11-14 7 8 5-4 8 10z"/>
  <circle cx="545" cy="191" r="19"/><path d="M558.400 177.600A19 19 0 0 0 531.600 204.400z" fill="#535353"/><circle cx="545" cy="191" r="18" fill="none" stroke="#dcdcdc" stroke-width="3"/>
  <path d="M618 173h36v11h-4l-2-5h-7v24h5v5h-20v-5h5v-24h-7l-2 5h-4z"/>
  <path d="M702 168h10v10h-10zM740 168h10v10h-10zM702 204h10v10h-10zM740 204h10v10h-10z"/>
  <path d="M815 172h20v38h-36v-22h10v-10z" fill="none" stroke="#dcdcdc" stroke-width="4"/><path d="M799 192h20v22h-20z"/>
  <path d="M202 387h42v42h-42z"/>
  <path d="M296 408l28-25 8 6-22 26z"/><path d="M306 412q-14 4-20 22 18 2 26-12z"/>
  <path d="M385 386l12 12h-9v7h9v-9l12 12-12 12v-9h-9v7h9l-12 12-12-12h9v-7h-9v9l-12-12 12-12v9h9v-7h-9z"/>
  <path d="M532 400h40v28h-40z"/>
 </g>
 <path d="M205 390h12v12h-12zM229 404h12v12h-12zM205 416h12v10h-12z" fill="#535353"/>
 <path d="M540 400v-8a12 10 0 0 1 24 0v8" fill="none" stroke="#dcdcdc" stroke-width="5"/><circle cx="552" cy="412" r="4" fill="#535353"/>
 <path d="M448 394h42v26h-42zM442 392h52M452 388v36" fill="none" stroke="#dcdcdc" stroke-width="3"/>
 <rect x="905" y="176" width="28" height="48" rx="14" fill="none" stroke="#404040" stroke-width="3"/>
 <circle cx="919" cy="176" r="14" fill="#dcdcdc"/>
 <!-- bottom icons -->
 <path d="M686 896h-8a9 9 0 0 0 0 18h8M694 896h8a9 9 0 0 1 0 18h-8M676 905h28" fill="none" stroke="#8c8c8c" stroke-width="4"/>
 <rect x="870" y="886" width="47" height="33" fill="#dcdcdc"/><circle cx="893" cy="903" r="11" fill="#535353"/>
 <circle cx="995" cy="902" r="19" fill="#dcdcdc"/><path d="M1008.400 888.600A19 19 0 0 0 981.600 915.400z" fill="#535353"/><circle cx="995" cy="902" r="18" fill="none" stroke="#dcdcdc" stroke-width="3"/>
 <path d="M1075 892h15l4 4h24v24h-43z" fill="#dcdcdc"/>
 <path d="M1190 888h26v26h-26zM1183 896v24h24" fill="none" stroke="#dcdcdc" stroke-width="4"/>
 <path d="M1283 895h30v28h-30zM1278 890h40" fill="none" stroke="#dcdcdc" stroke-width="4"/>
 <path d="M816 928h12l-6 6zM1017 928h12l-6 6z" fill="#fff"/>
</g>
<text x="1696" y="1000" font-size="17" font-style="italic" style="font-family:'Liberation Serif',serif" fill="#d8d8d8">fx</text>
<text x="1802" y="1000" font-size="15" fill="#c8c8c8" fill-opacity=".85" textLength="98" lengthAdjust="spacingAndGlyphs">CSDN @带碗饭</text>

<!-- status bar -->
<rect x="88" y="991" width="1292" height="20" fill="#535353"/>
<rect x="88" y="991" width="60" height="19" fill="#454545"/>
<rect x="360" y="991" width="17" height="20" fill="#4d4d4d"/>
<text x="101" y="1005" font-size="12" fill="#e0e0e0" textLength="33" lengthAdjust="spacingAndGlyphs">100%</text>
<text x="198" y="1005" font-size="13" fill="#d0d0d0" textLength="111" lengthAdjust="spacingAndGlyphs">文档:1.37M/4.15M</text>
<path d="M366 997l3 5-3 5" fill="none" stroke="#b0b0b0"/>
</svg>
</body></html>
